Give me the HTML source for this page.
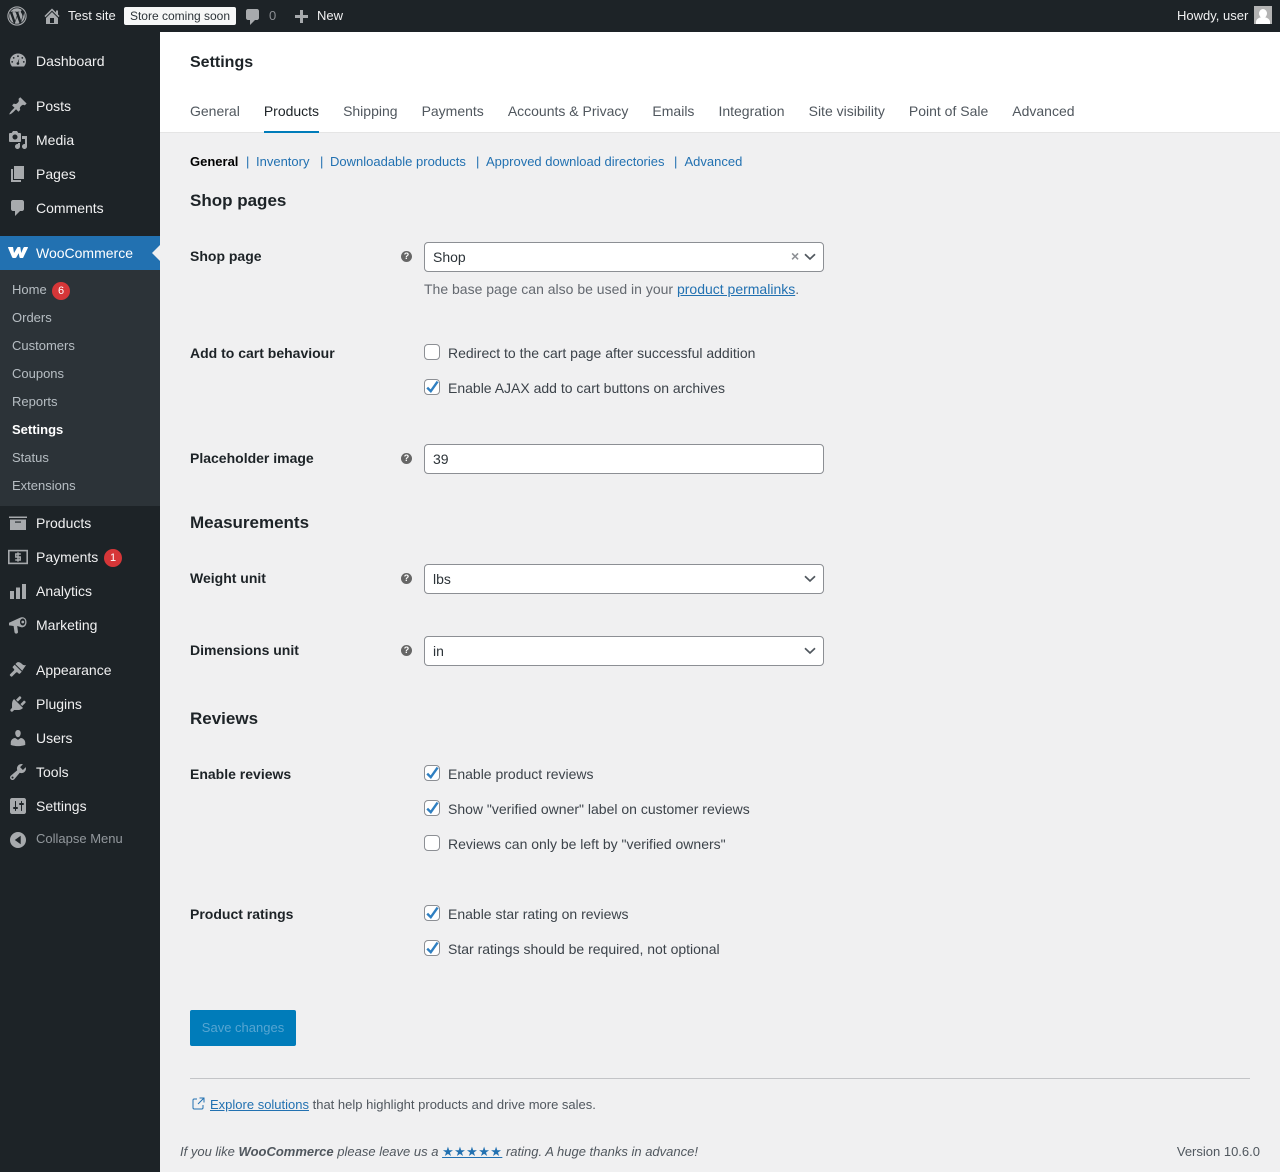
<!DOCTYPE html>
<html lang="en"><head><meta charset="utf-8"><title>Settings</title>
<style>
html,body{margin:0;padding:0}
body{width:1280px;height:1172px;overflow:hidden;position:relative;background:#f0f0f1;font-family:"Liberation Sans",sans-serif;font-size:14px;color:#3c434a}
.t{position:absolute;white-space:nowrap;line-height:20px}
.b{position:absolute}
.m{color:#f0f0f1;left:36px}
.s{color:rgba(240,246,252,.7);left:12px;font-size:13px}
.l{font-weight:700;color:#1d2327;left:190px}
.h{font-size:17px;font-weight:700;color:#1d2327;left:190px;line-height:22px}
.tabs{position:absolute;left:190px;top:101px;display:flex;gap:24px;line-height:20px;white-space:nowrap;color:#50575e}
a{color:#2271b1;text-decoration:underline}
.sub{color:#2271b1;font-size:13px;top:152px}
.sep{color:#2271b1;font-size:13px;top:152px}
svg{position:absolute;overflow:visible}
.ico{fill:#a7aaad}
.inp{position:absolute;left:424px;width:398px;height:28px;background:#fff;border:1px solid #8c8f94;border-radius:4px;line-height:28px;text-indent:8px;color:#2c3338}
.cb{position:absolute;left:424px;width:14px;height:14px;background:#fff;border:1px solid #8c8f94;border-radius:4px}
.cl{left:448px;color:#3c434a}
.q{position:absolute;left:401px;width:11px;height:11px;border-radius:50%;background:#666;color:#fff;font-size:9px;font-weight:700;line-height:11px;text-align:center}
.badge{position:absolute;width:18px;height:18px;border-radius:50%;background:#d63638;color:#fff;font-size:11px;line-height:18px;text-align:center}
</style></head><body>

<!-- admin bar -->
<div class="b" style="left:0;top:0;width:1280px;height:32px;background:#1d2327"></div>
<svg style="left:7px;top:6px" width="20" height="20" viewBox="0 0 20 20">
<circle cx="10" cy="10" r="9.100" fill="none" stroke="#a7aaad" stroke-width="1.100"/>
<path fill="#a7aaad" d="M2.200 10c0 3.100 1.800 5.800 4.400 7L2.900 6.800C2.500 7.800 2.200 8.900 2.200 10zM15.300 9.600c0-1-.4-1.600-.7-2.200-.4-.6-.8-1.200-.8-1.800 0-.7.500-1.300 1.300-1.300h.1C13.800 3 12 2.200 10 2.200 7.300 2.200 4.900 3.600 3.500 5.700h.5c.8 0 2.100-.1 2.100-.1.400 0 .5.600.1.600 0 0-.4.100-.9.100l2.900 8.500 1.700-5.200-1.200-3.300c-.4 0-.8-.1-.8-.1-.4 0-.4-.7 0-.6 0 0 1.300.1 2.100.1s2.100-.1 2.100-.1c.4 0 .5.600.1.600 0 0-.4.100-.9.100l2.800 8.500.8-2.700c.4-1 .6-1.800.6-2.400zM10.100 10.700l-2.300 6.800c.7.200 1.400.3 2.200.3.900 0 1.800-.2 2.600-.5 0 0 0-.1-.1-.1zM16.900 6.200c0 .3.100.5.100.8 0 .8-.1 1.600-.6 2.700l-2.300 6.800c2.300-1.300 3.700-3.800 3.700-6.500 0-1.400-.3-2.700-.9-3.800z"/>
</svg>
<svg style="left:42px;top:6px" width="20" height="20" viewBox="0 0 20 20"><path class="ico" d="M16 8.500l1.530 1.530-1.060 1.060L10 4.620l-6.470 6.470-1.060-1.060L10 2.500l4 4v-2h2v4zm-6-2.460l6 5.990V18H4v-5.970zM12 17v-5H8v5h4z"/></svg>
<div class="t" style="left:68px;top:6px;font-size:13px;color:#f0f0f1">Test site</div>
<div class="b" style="left:124px;top:7px;width:112px;height:18px;background:#f6f7f7;border-radius:2px;color:#2c3338;font-size:12px;line-height:18px;text-align:center">Store coming soon</div>
<svg style="left:243px;top:7px" width="20" height="20" viewBox="0 0 20 20"><path class="ico" d="M5 2h9c1.100 0 2 .9 2 2v7c0 1.100-.9 2-2 2h-2l-5 5v-5H5c-1.100 0-2-.9-2-2V4c0-1.100.9-2 2-2z"/></svg>
<div class="t" style="left:269px;top:6px;font-size:13px;color:#8c8f94">0</div>
<svg style="left:291px;top:8px" width="20" height="20" viewBox="0 0 20 20"><path class="ico" d="M17 7v3h-5v5H9v-5H4V7h5V2h3v5h5z"/></svg>
<div class="t" style="left:317px;top:6px;font-size:13px;color:#f0f0f1">New</div>
<div class="t" style="left:1177px;top:6px;font-size:13px;color:#f0f0f1">Howdy, user</div>
<div class="b" style="left:1254px;top:6px;width:18px;height:18px;background:#b4b4b4;overflow:hidden">
<div class="b" style="left:5px;top:3px;width:8px;height:9px;border-radius:50%;background:#fff"></div>
<div class="b" style="left:2px;top:11px;width:14px;height:10px;border-radius:50% 50% 0 0;background:#fff"></div></div>

<!-- sidebar -->
<div class="b" style="left:0;top:32px;width:160px;height:1140px;background:#1d2327"></div>
<div class="b" style="left:0;top:236px;width:160px;height:34px;background:#2271b1"></div>
<div class="b" style="left:0;top:270px;width:160px;height:236px;background:#2c3338"></div>
<div class="b" style="left:152px;top:245px;width:0;height:0;border-top:8px solid transparent;border-bottom:8px solid transparent;border-right:8px solid #f0f0f1"></div>

<svg style="left:8px;top:51px" width="20" height="20" viewBox="0 0 20 20"><path class="ico" fill-rule="evenodd" d="M10 2.500c-4.400 0-8 3.400-8 7.700 0 2 .8 3.800 2 5.300h12c1.200-1.500 2-3.300 2-5.300 0-4.300-3.600-7.700-8-7.700zM10 4.300a.9.9 0 1 1 0 1.800 .9.9 0 0 1 0-1.800zM5.700 6a.9.9 0 1 1 0 1.800 .9.9 0 0 1 0-1.800zM14.300 6a.9.9 0 1 1 0 1.800 .9.9 0 0 1 0-1.800zM4.200 10a.9.9 0 1 1 0 1.800 .9.9 0 0 1 0-1.800zM15.800 10a.9.9 0 1 1 0 1.800 .9.9 0 0 1 0-1.800zM11.300 7.200l-.6 4.200c.5.400.7 1 .5 1.600-.2.700-1 1-1.700.8-.7-.2-1.100-1-.9-1.700.2-.5.6-.9 1.100-.9z"/></svg>
<div class="t m" style="top:51px">Dashboard</div>

<svg style="left:8px;top:96px" width="20" height="20" viewBox="0 0 20 20"><path class="ico" d="M10.440 3.020l1.820-1.820 6.360 6.350-1.830 1.820c-1.050-.68-2.480-.57-3.410.36l-.75.75c-.92.93-1.040 2.350-.35 3.400l-1.830 1.820-2.410-2.410-2.800 2.790c-.42.42-3.380 2.710-3.800 2.290s1.860-3.390 2.280-3.810l2.790-2.790L4.100 9.360l1.830-1.820c1.050.69 2.480.57 3.400-.36l.75-.75c.93-.92 1.050-2.350.36-3.410z"/></svg>
<div class="t m" style="top:96px">Posts</div>

<svg style="left:8px;top:130px" width="20" height="20" viewBox="0 0 20 20"><path class="ico" fill-rule="evenodd" d="M13 11V4c0-.55-.45-1-1-1h-1.670L9 1H5L3.670 3H2c-.55 0-1 .45-1 1v7c0 .55.45 1 1 1h10c.55 0 1-.45 1-1zM7 4.500c1.380 0 2.500 1.120 2.500 2.500S8.380 9.500 7 9.500 4.500 8.380 4.500 7 5.620 4.500 7 4.500zM14 6h5v10.500c0 1.380-1.120 2.500-2.500 2.500S14 17.880 14 16.500s1.120-2.500 2.500-2.500c.17 0 .34.02.5.05V9h-3V6zm-4 8.050V13h2v3.500c0 1.380-1.120 2.500-2.500 2.500S7 17.880 7 16.500 8.120 14 9.500 14c.17 0 .34.02.5.05z"/></svg>
<div class="t m" style="top:130px">Media</div>

<svg style="left:8px;top:164px" width="20" height="20" viewBox="0 0 20 20"><path class="ico" d="M6 15V2h10v13H6zm-1 1h8v2H3V5h2v11z"/></svg>
<div class="t m" style="top:164px">Pages</div>

<svg style="left:8px;top:198px" width="20" height="20" viewBox="0 0 20 20"><path class="ico" d="M5 2h9c1.100 0 2 .9 2 2v7c0 1.100-.9 2-2 2h-2l-5 5v-5H5c-1.100 0-2-.9-2-2V4c0-1.100.9-2 2-2z"/></svg>
<div class="t m" style="top:198px">Comments</div>

<svg style="left:8px;top:247px" width="20" height="11" viewBox="0 0 20 11"><path fill="#fff" d="M0 .5C0 .2.300 0 .6 0h4c.3 0 .5.200.5.500l.9 5.500L9.200.6C9.400.2 9.700 0 10.100 0h1.700c.3 0 .5.200.6.500l.8 5.500L15.400.8C15.700.3 16.100 0 16.700 0h2.700c.5 0 .7.400.5.800l-4.500 9.400c-.2.500-.6.800-1.100.8h-2c-.4 0-.7-.3-.8-.7l-.8-4.100-2.300 4.100c-.3.500-.6.700-1.100.7H5.200c-.5 0-.9-.3-1.100-.7z"/></svg>
<div class="t" style="left:36px;top:243px;color:#fff">WooCommerce</div>

<div class="t s" style="top:280px">Home</div><div class="badge" style="left:52px;top:282px">6</div>
<div class="t s" style="top:308px">Orders</div>
<div class="t s" style="top:336px">Customers</div>
<div class="t s" style="top:364px">Coupons</div>
<div class="t s" style="top:392px">Reports</div>
<div class="t s" style="top:420px;color:#fff;font-weight:700">Settings</div>
<div class="t s" style="top:448px">Status</div>
<div class="t s" style="top:476px">Extensions</div>

<svg style="left:8px;top:513px" width="20" height="20" viewBox="0 0 20 20"><path class="ico" fill-rule="evenodd" d="M1 3.500h18V5H1zM2 6.500h16V17H2zM7 8.500v1.100h6V8.500z"/></svg>
<div class="t m" style="top:513px">Products</div>

<svg style="left:8px;top:547px" width="20" height="20" viewBox="0 0 20 20"><rect x=".8" y="3.600" width="18.400" height="12.800" fill="none" stroke="#a7aaad" stroke-width="1.600"/><path d="M12.800 7H7.800v3h4.400v3H7.200M10 5.400v9.200" fill="none" stroke="#a7aaad" stroke-width="1.500"/></svg>
<div class="t m" style="top:547px">Payments</div><div class="badge" style="left:104px;top:549px">1</div>

<svg style="left:8px;top:581px" width="20" height="20" viewBox="0 0 20 20"><path class="ico" d="M2 10h4v8H2zM8 6.500h4V18H8zM14 3h4v15h-4z"/></svg>
<div class="t m" style="top:581px">Analytics</div>

<svg style="left:8px;top:615px" width="20" height="20" viewBox="0 0 20 20"><path class="ico" fill-rule="evenodd" d="M1 7.800 12 2.800c2-1.300 6.500-.8 6.500 4.200S14.500 13 12.500 12L9.200 11 10 17c.1.800-.8 1.600-1.800 1.600s-1.500-.6-1.700-1.400L5.600 11 1 10.400zM14.800 3.500c-1.500 0-2.800 1.600-2.800 3.500s1.300 3.500 2.800 3.500 2.400-1.600 2.400-3.500-.9-3.500-2.400-3.500z"/><circle cx="14.800" cy="7" r="1.400" fill="#a7aaad"/></svg>
<div class="t m" style="top:615px">Marketing</div>

<svg style="left:8px;top:660px" width="20" height="20" viewBox="0 0 20 20"><path class="ico" d="M14.480 11.060L7.410 3.990l1.500-1.500c.5-.56 2.300-.47 3.510.32 1.210.8 1.430 1.280 2.660 2.010.96.56 2.960.32 2.960.32l-4.060 5.920zm-.71.71L6.700 4.700 4.930 6.470c-.39.39-.39 1.030 0 1.420l1.060 1.060c.39.39.39 1.030 0 1.420l-3.880 3.880c-.39.39-.39 1.020 0 1.410l.71.71c.39.39 1.020.39 1.410 0l3.880-3.880c.39-.39 1.030-.39 1.420 0l1.060 1.060c.39.39 1.030.39 1.420 0z"/></svg>
<div class="t m" style="top:660px">Appearance</div>

<svg style="left:8px;top:694px" width="20" height="20" viewBox="0 0 20 20"><path class="ico" d="M13.110 4.360L9.870 7.600 8 5.730l3.240-3.240c.35-.34 1.050-.2 1.560.31.52.51.66 1.210.31 1.560zm-8 1.770l.91-1.120 9.010 9.010-1.190.84c-.71.71-2.630 1.160-3.820 1.160H6.140L4.900 17.260c-.59.59-1.540.59-2.120 0-.59-.58-.59-1.530 0-2.120l1.240-1.240v-3.880c0-1.130.4-3.180 1.090-3.890zm7.260 3.970l3.240-3.240c.35-.34 1.050-.2 1.560.31.52.51.66 1.210.31 1.560l-3.240 3.240z"/></svg>
<div class="t m" style="top:694px">Plugins</div>

<svg style="left:8px;top:728px" width="20" height="20" viewBox="0 0 20 20"><path class="ico" d="M10 9.250c-2.270 0-2.730-3.440-2.730-3.440C7 4.020 7.820 2 9.970 2c2.160 0 2.980 2.020 2.710 3.810 0 0-.41 3.440-2.680 3.440zm0 2.570L12.720 10c2.390 0 4.520 2.330 4.520 4.530v2.490s-3.650 1.130-7.240 1.130c-3.650 0-7.240-1.130-7.240-1.130v-2.490c0-2.250 1.940-4.480 4.470-4.480z"/></svg>
<div class="t m" style="top:728px">Users</div>

<svg style="left:8px;top:762px" width="20" height="20" viewBox="0 0 20 20"><path class="ico" fill-rule="evenodd" d="M16.680 9.770c-1.340 1.340-3.300 1.670-4.950.99l-5.410 6.520c-.99.99-2.590.99-3.580 0s-.99-2.590 0-3.570l6.520-5.420c-.68-1.650-.35-3.610.99-4.950 1.280-1.280 3.120-1.620 4.720-1.060l-2.890 2.890 2.820 2.820 2.860-2.870c.53 1.580.18 3.400-1.080 4.650zM3.810 16.210c.4.39 1.040.39 1.430 0 .4-.4.4-1.040 0-1.440-.39-.39-1.030-.39-1.430 0-.39.4-.39 1.040 0 1.440z"/></svg>
<div class="t m" style="top:762px">Tools</div>

<svg style="left:8px;top:796px" width="20" height="20" viewBox="0 0 20 20"><path class="ico" fill-rule="evenodd" d="M18 16V4c0-1.100-.9-2-2-2H4c-1.100 0-2 .9-2 2v12c0 1.100.9 2 2 2h12c1.100 0 2-.9 2-2zM8 11h1c.55 0 1 .45 1 1s-.45 1-1 1H8v1.500c0 .28-.22.5-.5.5s-.5-.22-.5-.5V13H6c-.55 0-1-.45-1-1s.45-1 1-1h1V5.500c0-.28.22-.5.5-.5s.5.22.5.5V11zm5-2h-1c-.55 0-1-.45-1-1s.45-1 1-1h1V5.500c0-.28.22-.5.5-.5s.5.22.5.5V7h1c.55 0 1 .45 1 1s-.45 1-1 1h-1v5.500c0 .28-.22.5-.5.5s-.5-.22-.5-.5V9z"/></svg>
<div class="t m" style="top:796px">Settings</div>

<svg style="left:8px;top:830px" width="20" height="20" viewBox="0 0 20 20"><path class="ico" fill-rule="evenodd" d="M10 2a8 8 0 1 1 0 16 8 8 0 0 1 0-16zM12.700 5.800 6.800 10l5.900 4.200z"/></svg>
<div class="t" style="left:36px;top:829px;font-size:13px;color:rgba(240,246,252,.55)">Collapse Menu</div>

<!-- header -->
<div class="b" style="left:160px;top:32px;width:1120px;height:101px;background:#fff;border-bottom:1px solid #e5e5e5;box-sizing:border-box"></div>
<div class="t" style="left:190px;top:53px;font-size:16px;font-weight:700;color:#1d2327">Settings</div>
<div class="tabs"><span>General</span><span style="color:#1d2327">Products</span><span>Shipping</span><span>Payments</span><span>Accounts &amp; Privacy</span><span>Emails</span><span>Integration</span><span>Site visibility</span><span>Point of Sale</span><span>Advanced</span></div>
<div class="b" style="left:264px;top:131px;width:55px;height:2px;background:#007cba"></div>

<!-- sub nav -->
<div class="t sub" style="left:190px;color:#000;font-weight:700">General</div>
<div class="t sep" style="left:246px">|</div><div class="t sub" style="left:256px">Inventory</div>
<div class="t sep" style="left:320px">|</div><div class="t sub" style="left:330px">Downloadable products</div>
<div class="t sep" style="left:476px">|</div><div class="t sub" style="left:486px">Approved download directories</div>
<div class="t sep" style="left:674px">|</div><div class="t sub" style="left:684.500px">Advanced</div>

<div class="t h" style="top:190px">Shop pages</div>

<div class="t l" style="top:246px">Shop page</div>
<div class="q" style="top:251px">?</div>
<div class="inp" style="top:242px">Shop</div>
<div class="t" style="left:791px;top:246px;color:#8c8f94;font-size:14px;font-weight:700">×</div>
<svg style="left:804px;top:253px" width="12" height="8" viewBox="0 0 12 8"><path d="M1 1.200 6 6l5-4.800" fill="none" stroke="#50575e" stroke-width="1.700"/></svg>
<div class="t" style="left:424px;top:279px;color:#646970">The base page can also be used in your <a href="#">product permalinks</a>.</div>

<div class="t l" style="top:343px">Add to cart behaviour</div>
<div class="cb" style="top:344px"></div>
<div class="t cl" style="top:343px">Redirect to the cart page after successful addition</div>
<div class="cb" style="top:379px"><svg style="left:0;top:0" width="14" height="14" viewBox="0 0 14 14"><path d="M2.200 7.600 5.800 11.200 12.600 1.600" fill="none" stroke="#2f7fc1" stroke-width="2.400"/></svg></div>
<div class="t cl" style="top:378px">Enable AJAX add to cart buttons on archives</div>

<div class="t l" style="top:448px">Placeholder image</div>
<div class="q" style="top:453px">?</div>
<div class="inp" style="top:444px">39</div>

<div class="t h" style="top:512px">Measurements</div>

<div class="t l" style="top:568px">Weight unit</div>
<div class="q" style="top:573px">?</div>
<div class="inp" style="top:564px">lbs</div>
<svg style="left:804px;top:575px" width="12" height="8" viewBox="0 0 12 8"><path d="M1 1.200 6 6l5-4.800" fill="none" stroke="#50575e" stroke-width="1.700"/></svg>

<div class="t l" style="top:640px">Dimensions unit</div>
<div class="q" style="top:645px">?</div>
<div class="inp" style="top:636px">in</div>
<svg style="left:804px;top:647px" width="12" height="8" viewBox="0 0 12 8"><path d="M1 1.200 6 6l5-4.800" fill="none" stroke="#50575e" stroke-width="1.700"/></svg>

<div class="t h" style="top:708px">Reviews</div>

<div class="t l" style="top:764px">Enable reviews</div>
<div class="cb" style="top:765px"><svg style="left:0;top:0" width="14" height="14" viewBox="0 0 14 14"><path d="M2.200 7.600 5.800 11.200 12.600 1.600" fill="none" stroke="#2f7fc1" stroke-width="2.400"/></svg></div>
<div class="t cl" style="top:764px">Enable product reviews</div>
<div class="cb" style="top:800px"><svg style="left:0;top:0" width="14" height="14" viewBox="0 0 14 14"><path d="M2.200 7.600 5.800 11.200 12.600 1.600" fill="none" stroke="#2f7fc1" stroke-width="2.400"/></svg></div>
<div class="t cl" style="top:799px">Show "verified owner" label on customer reviews</div>
<div class="cb" style="top:835px"></div>
<div class="t cl" style="top:834px">Reviews can only be left by "verified owners"</div>

<div class="t l" style="top:904px">Product ratings</div>
<div class="cb" style="top:905px"><svg style="left:0;top:0" width="14" height="14" viewBox="0 0 14 14"><path d="M2.200 7.600 5.800 11.200 12.600 1.600" fill="none" stroke="#2f7fc1" stroke-width="2.400"/></svg></div>
<div class="t cl" style="top:904px">Enable star rating on reviews</div>
<div class="cb" style="top:940px"><svg style="left:0;top:0" width="14" height="14" viewBox="0 0 14 14"><path d="M2.200 7.600 5.800 11.200 12.600 1.600" fill="none" stroke="#2f7fc1" stroke-width="2.400"/></svg></div>
<div class="t cl" style="top:939px">Star ratings should be required, not optional</div>

<div class="b" style="left:190px;top:1010px;width:106px;height:36px;background:#007cba;border-radius:2px;color:#55a5d2;font-size:13px;line-height:36px;text-align:center">Save changes</div>
<div class="b" style="left:190px;top:1078px;width:1060px;height:1px;background:#c3c4c7"></div>

<svg style="left:192px;top:1097px" width="13" height="13" viewBox="0 0 13 13"><path d="M5 2H2.200C1.500 2 1 2.500 1 3.200v7.600c0 .7.500 1.200 1.200 1.200h7.600c.7 0 1.200-.5 1.200-1.200V8M7.500 1H12v4.500M12 1 6 7" fill="none" stroke="#2271b1" stroke-width="1"/></svg>
<div class="t" style="left:210px;top:1095px;font-size:13px;color:#50575e"><a href="#">Explore solutions</a> that help highlight products and drive more sales.</div>

<div class="t" style="left:180px;top:1142px;font-size:13px;font-style:italic;color:#50575e">If you like <b>WooCommerce</b> please leave us a <a href="#" style="font-family:'DejaVu Sans',sans-serif;font-size:13px;letter-spacing:.4px">★★★★★</a> rating. A huge thanks in advance!</div>
<div class="t" style="right:20px;top:1142px;font-size:13px;color:#50575e">Version 10.6.0</div>

</body></html>
